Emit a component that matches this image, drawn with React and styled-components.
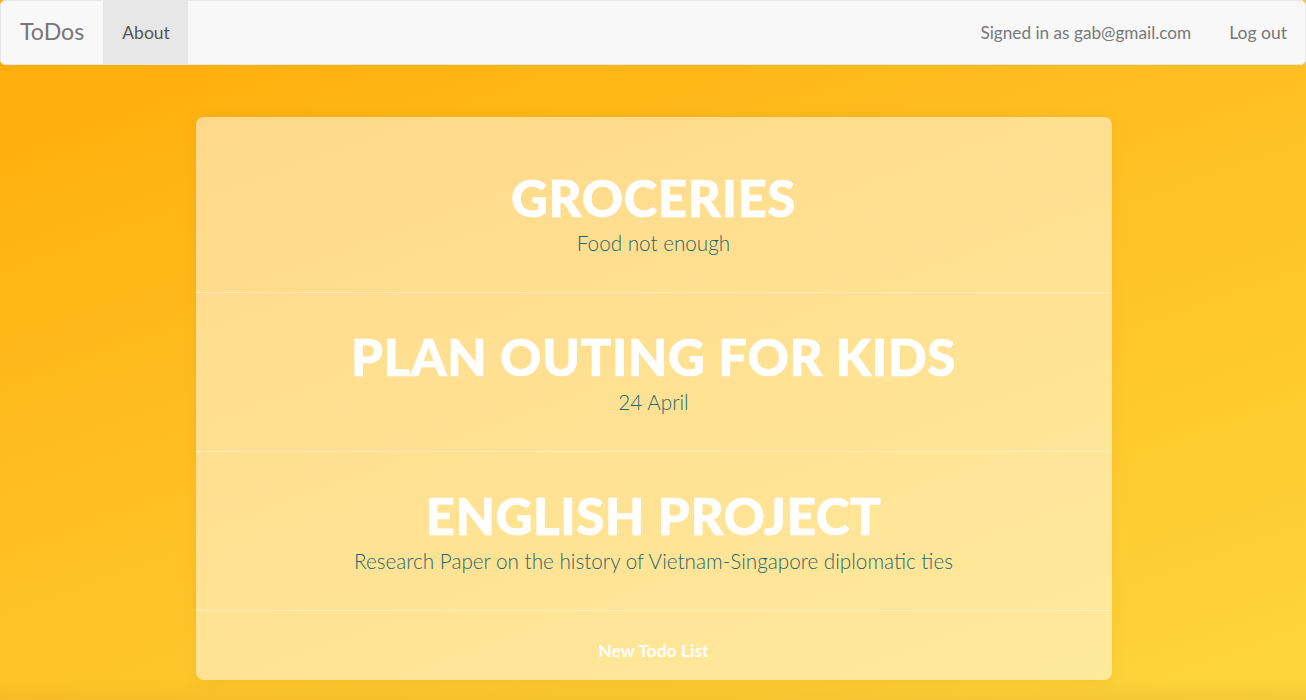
import React from "react";
import styled, { createGlobalStyle } from "styled-components";

const lists = [
  { id: 1, title: "Groceries", description: "Food not enough" },
  { id: 2, title: "Plan outing for kids", description: "24 April" },
  {
    id: 3,
    title: "English Project",
    description: "Research Paper on the history of Vietnam-Singapore diplomatic ties",
  },
];

const font = '"Lato", "Noto Sans", sans-serif';
const navBg = '#f8f8f8';
const navBorder = '#e7e7e7';
const navText = '#777777';
const activeText = '#555555';
const descColor = '#1f686d';

const GlobalStyle = createGlobalStyle`
  html, body {
    margin: 0;
    padding: 0;
  }
  body {
    font-family: ${font};
    min-height: 700px;
    background:
      linear-gradient(to bottom, rgba(170, 100, 0, 0) 678px, rgba(170, 100, 0, 0.1) 700px),
      linear-gradient(160deg, #ffab08 0%, #ffbf22 45%, #fdd63c 100%);
    background-repeat: no-repeat;
    background-size: 100% 700px;
  }
`;

const Page = styled.div`
  min-height: 700px;
  padding-left: 1px;
`;

const Navbar = styled.nav`
  display: flex;
  align-items: stretch;
  height: 63px;
  margin-left: -1px;
  background-color: ${navBg};
  border: 1px solid ${navBorder};
  border-radius: 5px;
`;

const Brand = styled.a`
  display: block;
  padding: 18px 19px 0 19px;
  font-size: 23.2px;
  line-height: 25px;
  color: ${navText};
  text-decoration: none;
`;

const NavGroup = styled.div`
  display: flex;
  align-items: stretch;
  margin-left: ${(p) => (p.$right ? 'auto' : '0')};
`;

const NavLink = styled.a`
  display: block;
  padding: 19px 18px 0 19px;
  font-size: 17.5px;
  line-height: 25px;
  color: ${(p) => (p.$active ? activeText : navText)};
  background-color: ${(p) => (p.$active ? navBorder : 'transparent')};
  text-decoration: none;
`;

const NavText = styled.span`
  display: block;
  padding-top: 19px;
  margin-right: 19px;
  font-size: 17.2px;
  line-height: 25px;
  color: ${navText};
`;

const Card = styled.div`
  width: 916px;
  margin: 52px auto 0;
  padding-top: 17px;
  background-color: rgba(255, 255, 255, 0.5);
  border-radius: 8px;
  box-shadow: 0 2px 14px rgba(180, 110, 0, 0.12);
  overflow: hidden;
`;

const ListRow = styled.div`
  padding: 36px 0 35px;
  text-align: center;
  border-bottom: 1px solid rgba(255, 255, 255, 0.35);
`;

const ListTitle = styled.h1`
  margin: 0;
  font-size: 51px;
  line-height: 55px;
  font-weight: 900;
  letter-spacing: 0.6px;
  color: #ffffff;
  -webkit-text-stroke: 0.7px #ffffff;
  text-transform: uppercase;
`;

const ListDescription = styled.p`
  margin: 4px 0 0;
  font-size: 20.7px;
  line-height: 28px;
  font-weight: 300;
  color: ${descColor};
`;

const NewList = styled.a`
  display: block;
  padding: 27px 0 17px;
  text-align: center;
  font-size: 17.5px;
  line-height: 25px;
  font-weight: 700;
  color: #ffffff;
  text-decoration: none;
`;

function App() {
  return (
    <Page>
      <GlobalStyle />
      <Navbar>
        <Brand href="#">ToDos</Brand>
        <NavGroup>
          <NavLink href="#" $active>About</NavLink>
        </NavGroup>
        <NavGroup $right>
          <NavText>Signed in as gab@gmail.com</NavText>
          <NavLink href="#">Log out</NavLink>
        </NavGroup>
      </Navbar>
      <Card>
        {lists.map((list) => (
          <ListRow key={list.id}>
            <ListTitle>{list.title}</ListTitle>
            <ListDescription>{list.description}</ListDescription>
          </ListRow>
        ))}
        <NewList href="#">New Todo List</NewList>
      </Card>
    </Page>
  );
}

export default App;
